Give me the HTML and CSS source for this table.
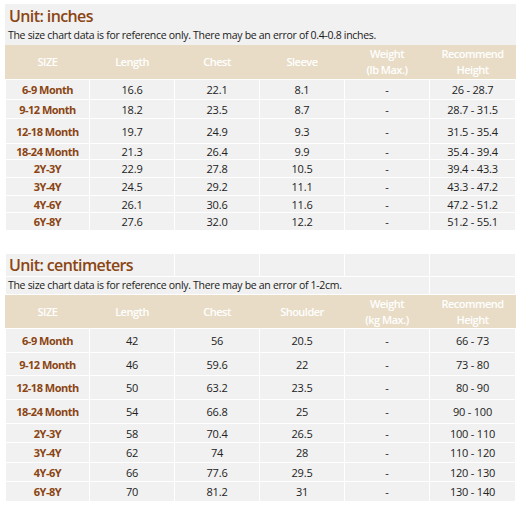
FILE: index.html
```html
<!DOCTYPE html>
<html>
<head>
<meta charset="utf-8">
<link rel="stylesheet" href="styles.css">
</head>
<body>
<table class="chart chart-in">
  <colgroup><col class="c1"><col class="c"><col class="c"><col class="c"><col class="c"><col class="c6"></colgroup>
  <tr class="title-row"><td colspan="6" class="title">Unit: inches</td></tr>
  <tr class="note-row"><td colspan="6" class="note">The size chart data is for reference only. There may be an error of 0.4-0.8 inches.</td></tr>
  <tr class="head"><th>SIZE</th><th>Length</th><th>Chest</th><th>Sleeve</th><th>Weight<br>(lb Max.)</th><th>Recommend<br>Height</th></tr>
  <tr><td class="size">6-9 Month</td><td>16.6</td><td>22.1</td><td>8.1</td><td>-</td><td>26 - 28.7</td></tr>
  <tr><td class="size">9-12 Month</td><td>18.2</td><td>23.5</td><td>8.7</td><td>-</td><td>28.7 - 31.5</td></tr>
  <tr><td class="size">12-18 Month</td><td>19.7</td><td>24.9</td><td>9.3</td><td>-</td><td>31.5 - 35.4</td></tr>
  <tr><td class="size">18-24 Month</td><td>21.3</td><td>26.4</td><td>9.9</td><td>-</td><td>35.4 - 39.4</td></tr>
  <tr><td class="size">2Y-3Y</td><td>22.9</td><td>27.8</td><td>10.5</td><td>-</td><td>39.4 - 43.3</td></tr>
  <tr><td class="size">3Y-4Y</td><td>24.5</td><td>29.2</td><td>11.1</td><td>-</td><td>43.3 - 47.2</td></tr>
  <tr><td class="size">4Y-6Y</td><td>26.1</td><td>30.6</td><td>11.6</td><td>-</td><td>47.2 - 51.2</td></tr>
  <tr><td class="size">6Y-8Y</td><td>27.6</td><td>32.0</td><td>12.2</td><td>-</td><td>51.2 - 55.1</td></tr>
</table>

<table class="chart chart-cm">
  <colgroup><col class="c1"><col class="c"><col class="c"><col class="c"><col class="c"><col class="c6"></colgroup>
  <tr class="title-row"><td colspan="2" class="title">Unit: centimeters</td><td></td><td></td><td></td><td></td></tr>
  <tr class="note-row"><td colspan="5" class="note">The size chart data is for reference only. There may be an error of 1-2cm.</td><td></td></tr>
  <tr class="head"><th>SIZE</th><th>Length</th><th>Chest</th><th>Shoulder</th><th>Weight<br>(kg Max.)</th><th>Recommend<br>Height</th></tr>
  <tr><td class="size">6-9 Month</td><td>42</td><td>56</td><td>20.5</td><td>-</td><td>66 - 73</td></tr>
  <tr><td class="size">9-12 Month</td><td>46</td><td>59.6</td><td>22</td><td>-</td><td>73 - 80</td></tr>
  <tr><td class="size">12-18 Month</td><td>50</td><td>63.2</td><td>23.5</td><td>-</td><td>80 - 90</td></tr>
  <tr><td class="size">18-24 Month</td><td>54</td><td>66.8</td><td>25</td><td>-</td><td>90 - 100</td></tr>
  <tr><td class="size">2Y-3Y</td><td>58</td><td>70.4</td><td>26.5</td><td>-</td><td>100 - 110</td></tr>
  <tr><td class="size">3Y-4Y</td><td>62</td><td>74</td><td>28</td><td>-</td><td>110 - 120</td></tr>
  <tr><td class="size">4Y-6Y</td><td>66</td><td>77.6</td><td>29.5</td><td>-</td><td>120 - 130</td></tr>
  <tr><td class="size">6Y-8Y</td><td>70</td><td>81.2</td><td>31</td><td>-</td><td>130 - 140</td></tr>
</table>
</body>
</html>
```

FILE: styles.css
```css
html, body {
  margin: 0;
  background: #ffffff;
}
body {
  padding: 4px 4px 0 5px;
  font-family: "Open Sans", "Noto Sans", sans-serif;
  color: #222;
}
.chart {
  border-collapse: collapse;
  table-layout: fixed;
  width: 510px;
  background: #f1f1f1;
  font-size: 11px;
}
.chart-cm {
  margin-top: 22px;
  border-top: 1px solid #f4f4f4;
}
.c1 { width: 84px; }
.c { width: 85px; }
.c6 { width: 86px; }
.chart td, .chart th {
  padding: 0;
  text-align: center;
  vertical-align: middle;
  border: 1px solid #ffffff;
  line-height: 15px;
  overflow: hidden;
  white-space: nowrap;
  letter-spacing: -0.2px;
}
.chart-in .title-row td, .chart-in .note-row td {
  border-color: #f1f1f1;
}
.chart td.title {
  text-align: left;
  padding-left: 3px;
  font-size: 16px;
  font-weight: 600;
  letter-spacing: -0.6px;
  color: #8b4513;
  line-height: 20px;
}
.chart td.note {
  text-align: left;
  padding-left: 2px;
  font-size: 10.5px;
  letter-spacing: -0.3px;
  color: #1a1a1a;
}
.chart th {
  background: #e8dcc6;
  color: #ffffff;
  font-weight: 600;
  letter-spacing: -0.5px;
  border-left-color: #e8dcc6;
  border-right-color: #e8dcc6;
  border-top-color: #e8dcc6;
  line-height: 16px;
}
.chart td.size {
  color: #8b4513;
  font-weight: 700;
  letter-spacing: -0.5px;
}

/* row heights — inches */
.chart-in tr:nth-child(1) { height: 22px; }
.chart-in tr:nth-child(2) { height: 18px; }
.chart-in tr:nth-child(3) { height: 35px; }
.chart-in tr:nth-child(4) { height: 20px; }
.chart-in tr:nth-child(5) { height: 19px; }
.chart-in tr:nth-child(6) { height: 25px; }
.chart-in tr:nth-child(7) { height: 16px; }
.chart-in tr:nth-child(8) { height: 18px; }
.chart-in tr:nth-child(9) { height: 18px; }
.chart-in tr:nth-child(10) { height: 17px; }
.chart-in tr:nth-child(11) { height: 18px; }

/* row heights — centimeters */
.chart-cm tr:nth-child(1) { height: 23px; }
.chart-cm tr:nth-child(2) { height: 18px; }
.chart-cm tr:nth-child(3) { height: 34px; }
.chart-cm tr:nth-child(4) { height: 24px; }
.chart-cm tr:nth-child(5) { height: 23px; }
.chart-cm tr:nth-child(6) { height: 24px; }
.chart-cm tr:nth-child(7) { height: 24px; }
.chart-cm tr:nth-child(8) { height: 19px; }
.chart-cm tr:nth-child(9) { height: 20px; }
.chart-cm tr:nth-child(10) { height: 19px; }
.chart-cm tr:nth-child(11) { height: 20px; }
```
